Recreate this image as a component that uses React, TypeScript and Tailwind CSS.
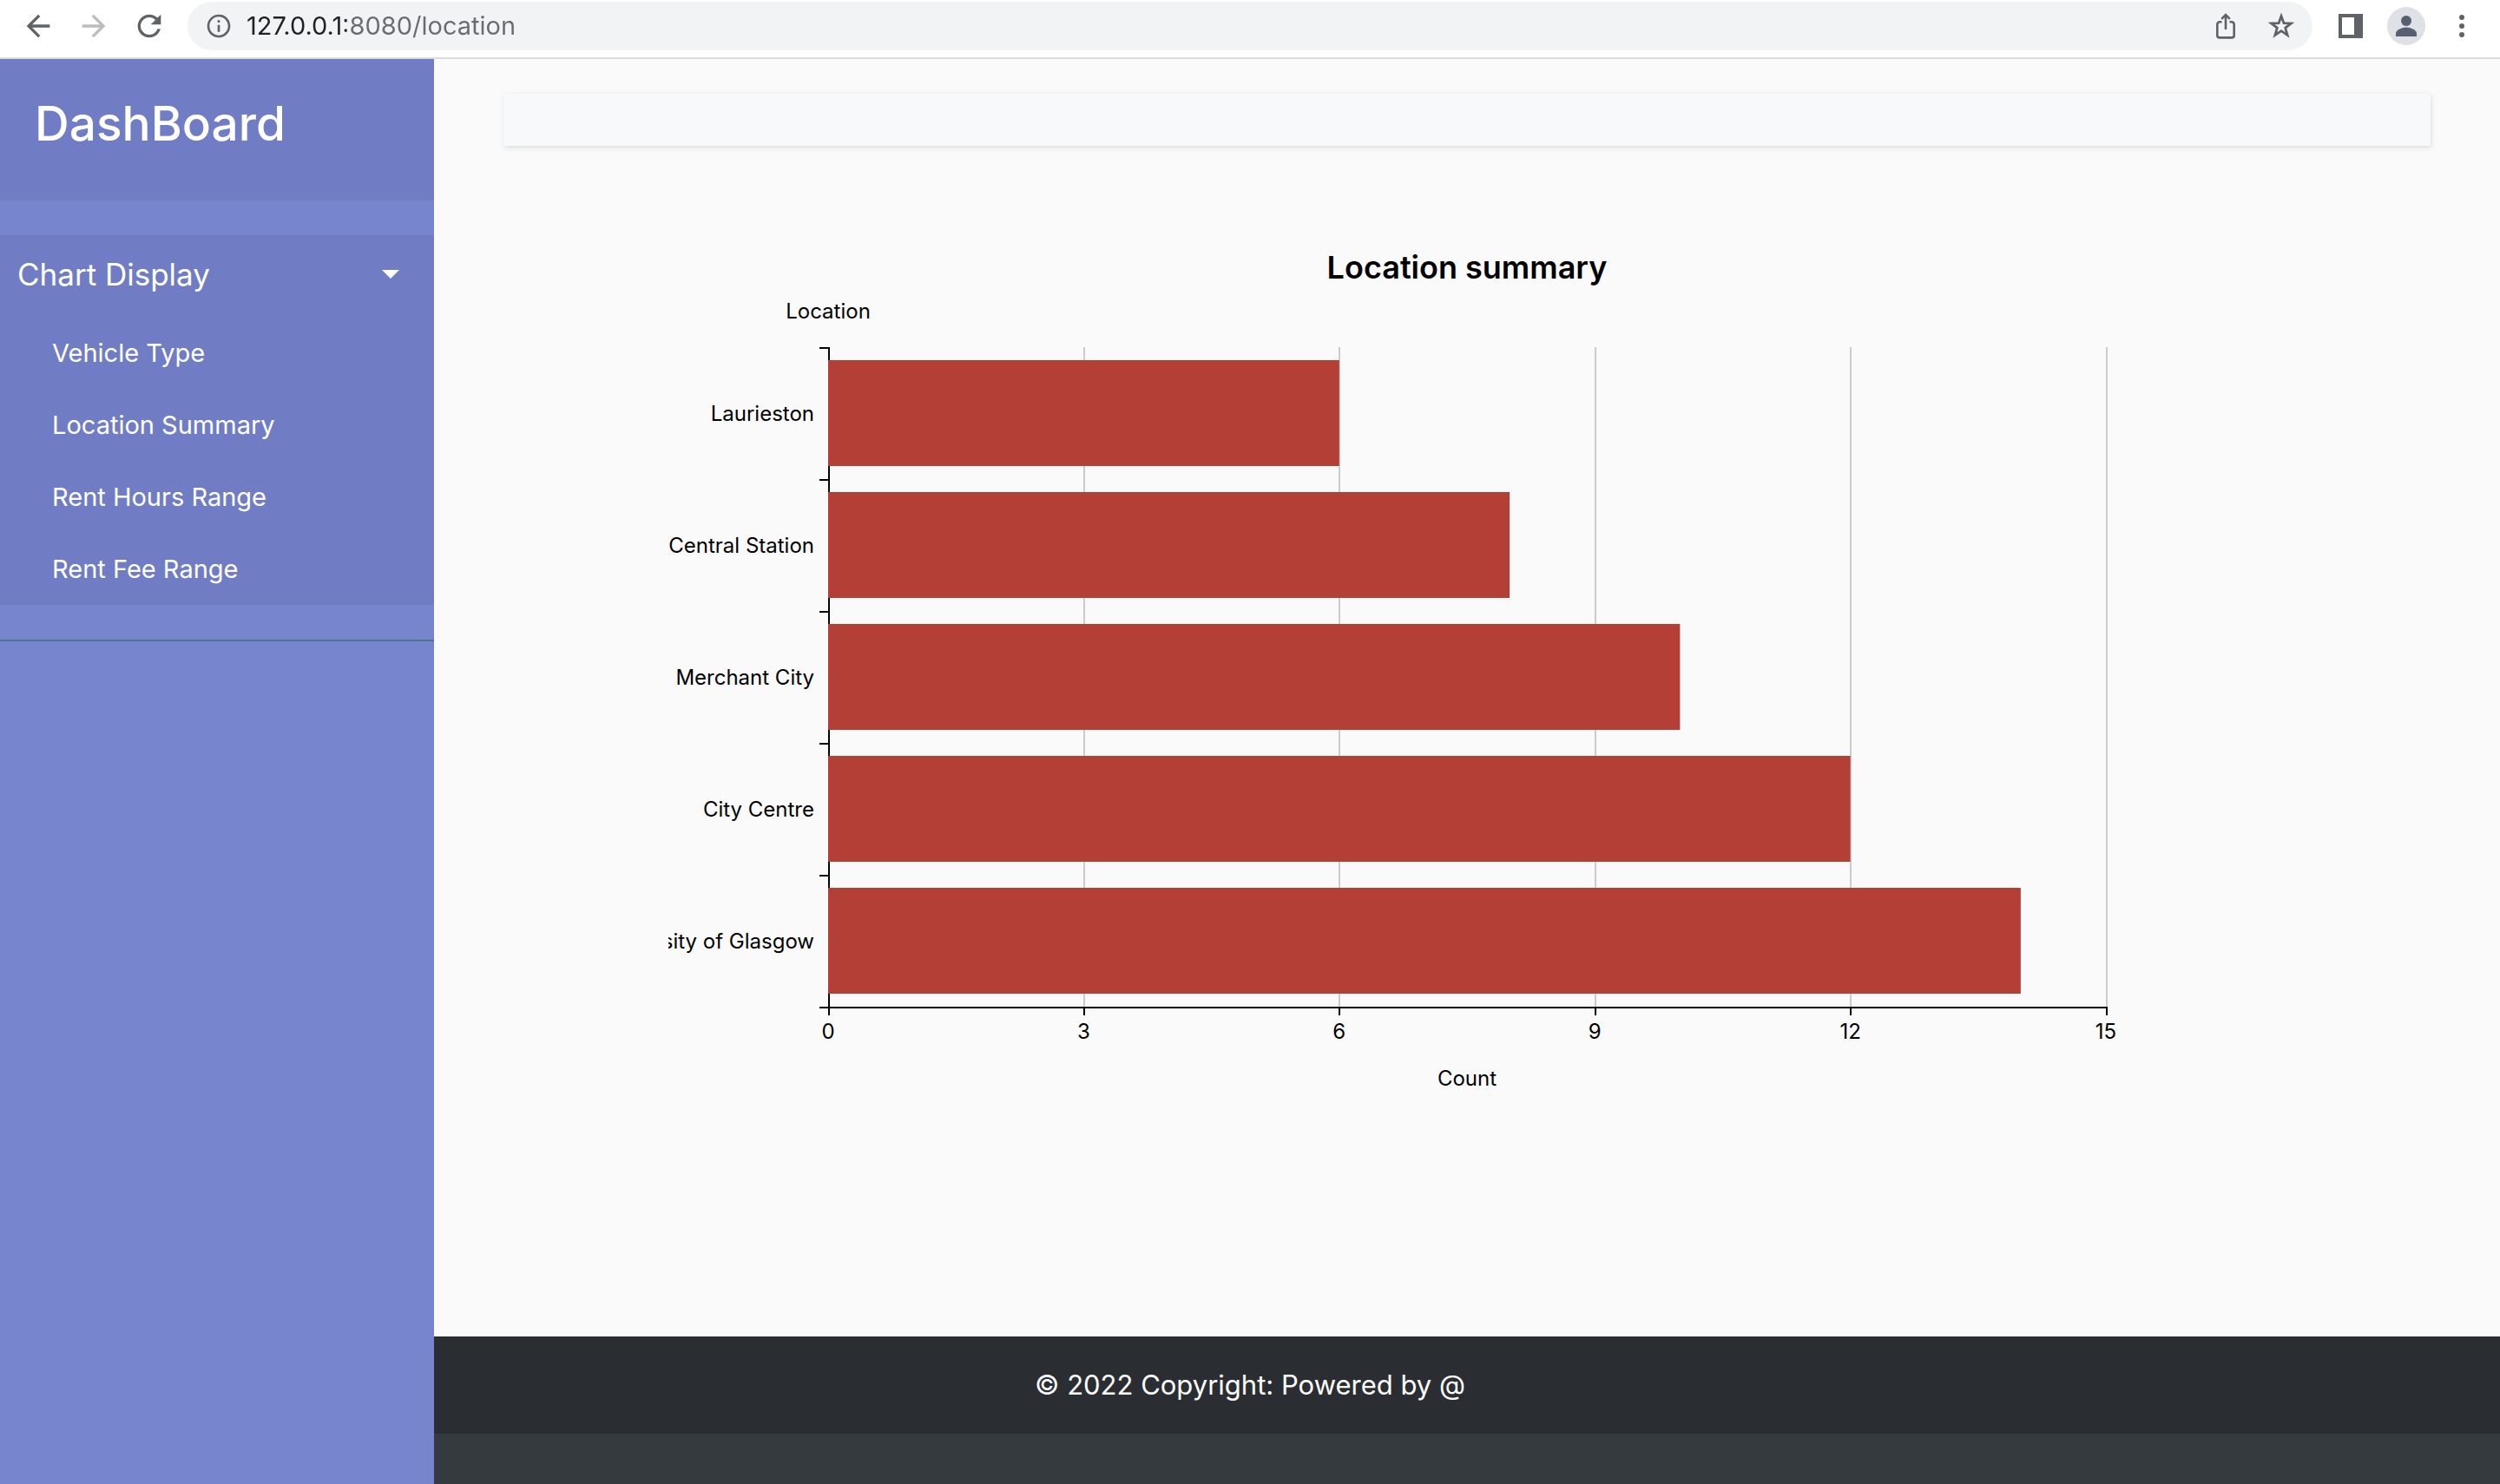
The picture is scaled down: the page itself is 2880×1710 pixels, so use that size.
import React from "react";
import { MdArrowBack, MdArrowForward, MdInfoOutline, MdRefresh } from "react-icons/md";

const links = ["Vehicle Type", "Location Summary", "Rent Hours Range", "Rent Fee Range"];

const data = [
  { name: "Laurieston", count: 6 },
  { name: "Central Station", count: 8 },
  { name: "Merchant City", count: 10 },
  { name: "City Centre", count: 12 },
  { name: "University of Glasgow", count: 14 },
];

const toolButton = "flex h-14 w-16 shrink-0 items-center justify-center text-[#5f6368]";

function BrowserBar() {
  return (
    <header className="flex h-[68px] shrink-0 items-start border-b-2 border-[#dcdcde] bg-white px-3 pt-0.5">
      <button aria-label="Back" className={toolButton}>
        <MdArrowBack size={40} />
      </button>
      <button aria-label="Forward" className="flex h-14 w-16 shrink-0 items-center justify-center text-[#babcbe]">
        <MdArrowForward size={40} />
      </button>
      <button aria-label="Reload" className={toolButton}>
        <MdRefresh size={40} />
      </button>
      <div className="mx-3 flex h-14 min-w-0 flex-1 items-center rounded-full bg-[#f1f3f4] pr-1 pl-5">
        <button aria-label="Site information" className="flex h-8 w-8 items-center justify-center text-[#5f6368]">
          <MdInfoOutline size={32} />
        </button>
        <input
          aria-label="Address"
          defaultValue="127.0.0.1:8080/location"
          className="ml-4 min-w-0 flex-1 bg-linear-to-r from-[#202124] from-[115px] to-[#686b70] to-[115px] bg-clip-text text-[29px] leading-10 text-transparent outline-none"
        />
        <button aria-label="Share" className={toolButton}>
          <svg width="24" height="32" viewBox="0 0 24 32" fill="none" stroke="currentColor" strokeWidth="2.6">
            <path d="M7.5 11.3H5a2.7 2.7 0 0 0-2.7 2.7v12.7a2.7 2.7 0 0 0 2.7 2.7h14a2.7 2.7 0 0 0 2.7-2.7V14a2.7 2.7 0 0 0-2.7-2.7h-2.5" />
            <path d="M12 20V3M7.2 7.8 12 3l4.800 4.800" />
          </svg>
        </button>
        <button aria-label="Bookmark" className={toolButton}>
          <svg width="32" height="32" viewBox="0 0 32 32" fill="none" stroke="currentColor" strokeWidth="2.8">
            <path d="M16 4.6 18.9 12.6 27.4 12.9 20.7 18.1 23.1 26.4 16 21.6 8.9 26.4 11.3 18.1 4.6 12.9 13.1 12.6Z" />
          </svg>
        </button>
      </div>
      <button aria-label="Side panel" className={toolButton}>
        <svg width="28" height="28" viewBox="0 0 28 28" fill="currentColor">
          <path fillRule="evenodd" d="M0 0H28V28H0ZM4 4V24H18V4Z" />
        </svg>
      </button>
      <button aria-label="Profile" className={toolButton}>
        <svg width="44" height="44" viewBox="0 0 44 44">
          <circle cx="22" cy="22" r="22" fill="#dfe1e6" />
          <circle cx="22" cy="16" r="6" fill="#566070" />
          <path d="M10 34v-3.5c0-4 7-7 12-7s12 3 12 7V34Z" fill="#566070" />
        </svg>
      </button>
      <button aria-label="Menu" className={toolButton}>
        <svg width="8" height="28" viewBox="0 0 8 28" fill="currentColor">
          <circle cx="4" cy="4" r="3" />
          <circle cx="4" cy="14" r="3" />
          <circle cx="4" cy="24" r="3" />
        </svg>
      </button>
    </header>
  );
}

function Sidebar() {
  return (
    <aside className="w-[500px] shrink-0 bg-[#7785ce] text-white">
      <div className="h-[163px] bg-[#707dc5] px-10 pt-[38px]">
        <h1 className="text-[55px] leading-[72px] font-medium">DashBoard</h1>
      </div>
      <nav className="border-b-2 border-[#4f7488] py-10">
        <div className="bg-[#707dc5]">
          <button aria-expanded="true" className="flex h-[94px] w-full items-center justify-between pr-10 pb-1 pl-5 text-[35px] leading-[48px]">
            Chart Display
            <svg width="20" height="10" viewBox="0 0 20 10" fill="currentColor">
              <path d="M0 0H20L10 10Z" />
            </svg>
          </button>
          <ul>
            {links.map((label) => (
              <li key={label}>
                <a href="#" className="flex h-[83px] items-center pl-[60px] text-[29px] leading-10">
                  {label}
                </a>
              </li>
            ))}
          </ul>
        </div>
      </nav>
    </aside>
  );
}

function LocationChart() {
  const left = 184;
  const top = 120;
  const plotWidth = 1472;
  const band = 152;
  const bottom = top + band * data.length;
  const x = (value: number) => left + (plotWidth * value) / 15;
  const ticks = [0, 3, 6, 9, 12, 15];
  return (
    <svg viewBox="0 0 1840 1000" className="mx-auto w-full max-w-[1840px] overflow-hidden text-[24px]" role="img" aria-label="Location summary">
      <text x="920" y="41" textAnchor="middle" className="text-[36px] font-semibold">
        Location summary
      </text>
      <text x={left} y="87" textAnchor="middle">
        Location
      </text>
      {ticks.slice(1).map((tick) => (
        <rect key={tick} x={Math.floor(x(tick))} y={top} width="2" height={bottom - top} fill="#cccccc" />
      ))}
      <rect x={left} y={top} width="2" height={bottom - top + 10} />
      <rect x={left - 10} y={bottom} width={plotWidth + 12} height="2" />
      {ticks.map((tick) => (
        <g key={tick}>
          <rect x={Math.floor(x(tick))} y={bottom} width="2" height="10" />
          <text x={x(tick)} y={bottom + 37} textAnchor="middle">
            {tick}
          </text>
        </g>
      ))}
      {data.map((item, i) => (
        <g key={item.name}>
          <rect x={left - 10} y={top + band * i} width="10" height="2" />
          <rect x={left} y={top + band * i + 15} width={x(item.count) - left} height="122" fill="#b43f36" />
          <text x={left - 16} y={top + band * i + 85} textAnchor="end">
            {item.name}
          </text>
        </g>
      ))}
      <text x="920" y="971" textAnchor="middle">
        Count
      </text>
    </svg>
  );
}

export default function App() {
  return (
    <div className="flex min-h-screen flex-col font-[Inter,sans-serif]">
      <BrowserBar />
      <div className="flex flex-1">
        <Sidebar />
        <div className="flex min-w-0 flex-1 flex-col bg-[#fafafa]">
          <main className="flex-1 px-20 pt-10">
            <div className="h-[60px] bg-[#f8f9fb] shadow-[1px_2px_6px_rgba(0,0,0,0.12)]" />
            <div className="pt-28 text-black">
              <LocationChart />
            </div>
          </main>
          <footer className="bg-[#353a3e] pb-[58px] text-white">
            <div className="flex h-28 items-center justify-center bg-[#2a2e32] pr-[500px] text-[31px] leading-[48px]">
              © 2022 Copyright: Powered by @
            </div>
          </footer>
        </div>
      </div>
    </div>
  );
}
